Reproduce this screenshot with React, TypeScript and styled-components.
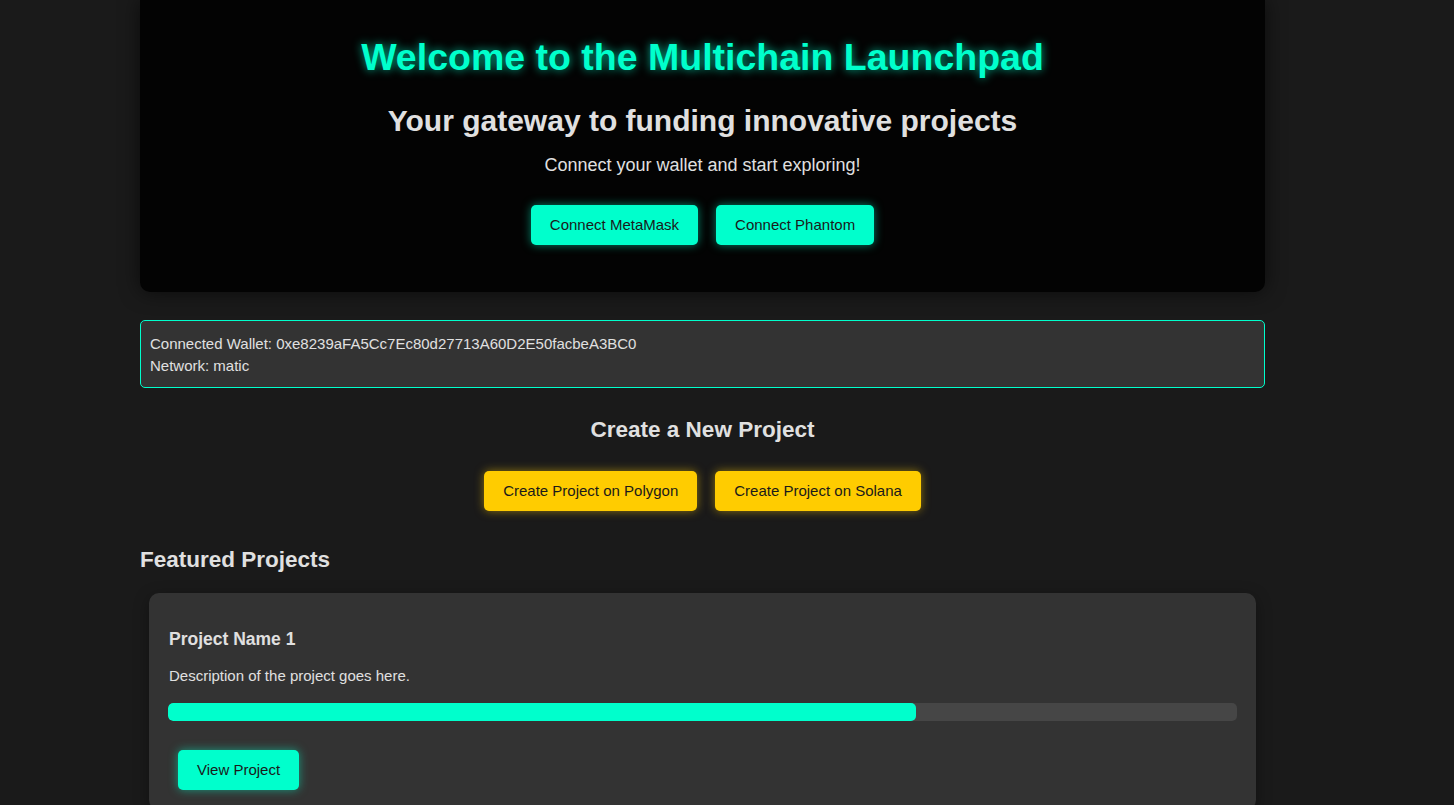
import styled, { createGlobalStyle } from 'styled-components'

const colors = {
  page: '#1a1a1a',
  hero: '#030303',
  panel: '#333333',
  track: '#464646',
  text: '#e0e0e0',
  accent: '#00ffcc',
  yellow: '#ffcc00',
  dark: '#1a1a1a',
}

const GlobalStyle = createGlobalStyle`
  html, body {
    margin: 0;
    padding: 0;
    background: ${colors.page};
    color: ${colors.text};
    font-family: 'Liberation Sans', Arial, sans-serif;
    font-size: 15px;
  }
`

const Page = styled.div`
  width: 1125px;
  margin-left: 140px;
  display: flex;
  flex-direction: column;
`

const Hero = styled.header`
  background: ${colors.hero};
  border-radius: 0 0 10px 10px;
  box-shadow: 0 0 20px rgba(0, 0, 0, 0.6);
  padding: 35px 20px 47px;
  display: flex;
  flex-direction: column;
  align-items: center;
  text-align: center;
`

const Title = styled.h1`
  margin: 0;
  font-size: 37.5px;
  line-height: 44px;
  font-weight: bold;
  color: ${colors.accent};
  text-shadow: 0 0 10px rgba(0, 255, 204, 0.7);
`

const Subtitle = styled.h2`
  margin: 25px 0 0;
  font-size: 30px;
  line-height: 34px;
  font-weight: bold;
  color: ${colors.text};
`

const Lead = styled.p`
  margin: 17px 0 0;
  font-size: 18px;
  line-height: 20px;
`

// Row of buttons, centered
const ButtonRow = styled.div<{ top: number }>`
  display: flex;
  justify-content: center;
  gap: 18px;
  margin-top: ${(p) => p.top}px;
`

const Button = styled.button<{ tone?: 'accent' | 'yellow' }>`
  border: none;
  border-radius: 5px;
  padding: 11px 19px;
  font-family: inherit;
  font-size: 15px;
  line-height: 18px;
  color: ${colors.dark};
  cursor: pointer;
  background: ${(p) => (p.tone === 'yellow' ? colors.yellow : colors.accent)};
  box-shadow: ${(p) =>
    p.tone === 'yellow'
      ? '0 0 10px rgba(255, 204, 0, 0.5)'
      : '0 0 10px rgba(0, 255, 204, 0.5)'};
`

const WalletBox = styled.div`
  margin-top: 28px;
  background: ${colors.panel};
  border: 1px solid ${colors.accent};
  border-radius: 5px;
  padding: 12px 9px 10px;
  font-size: 15px;
  line-height: 22px;
`

const SectionTitle = styled.h2<{ center?: boolean; top: number }>`
  margin: ${(p) => p.top}px 0 0;
  font-size: 22.5px;
  line-height: 26px;
  font-weight: bold;
  text-align: ${(p) => (p.center ? 'center' : 'left')};
`

const Card = styled.div`
  margin: 20px 9px 0;
  background: ${colors.panel};
  border-radius: 10px;
  box-shadow: 0 4px 15px rgba(0, 0, 0, 0.35);
  padding: 36px 19px 20px;
`

const CardTitle = styled.h3`
  margin: 0 0 0 1px;
  font-size: 17.5px;
  line-height: 20px;
  font-weight: bold;
`

const CardText = styled.p`
  margin: 18px 0 0 1px;
  font-size: 15px;
  line-height: 17px;
`

const Track = styled.div`
  margin-top: 19px;
  height: 18px;
  background: ${colors.track};
  border-radius: 5px;
  overflow: hidden;
`

const Fill = styled.div`
  height: 100%;
  background: ${colors.accent};
  border-radius: 5px;
`

const CardActions = styled.div`
  margin-top: 29px;
  padding-left: 10px;
  display: flex;
`

const projects = [{ name: 'Project Name 1', description: 'Description of the project goes here.', progress: 0.7 }]

const App = () => (
  <>
    <GlobalStyle />
    <Page>
      <Hero>
        <Title>Welcome to the Multichain Launchpad</Title>
        <Subtitle>Your gateway to funding innovative projects</Subtitle>
        <Lead>Connect your wallet and start exploring!</Lead>
        <ButtonRow top={30}>
          <Button>Connect MetaMask</Button>
          <Button>Connect Phantom</Button>
        </ButtonRow>
      </Hero>

      <WalletBox>
        <div>Connected Wallet: 0xe8239aFA5Cc7Ec80d27713A60D2E50facbeA3BC0</div>
        <div>Network: matic</div>
      </WalletBox>

      <SectionTitle center top={29}>
        Create a New Project
      </SectionTitle>
      <ButtonRow top={28}>
        <Button tone="yellow">Create Project on Polygon</Button>
        <Button tone="yellow">Create Project on Solana</Button>
      </ButtonRow>

      <SectionTitle top={36}>Featured Projects</SectionTitle>
      {projects.map((project) => (
        <Card key={project.name}>
          <CardTitle>{project.name}</CardTitle>
          <CardText>{project.description}</CardText>
          <Track>
            <Fill style={{ width: `${project.progress * 100}%` }} />
          </Track>
          <CardActions>
            <Button>View Project</Button>
          </CardActions>
        </Card>
      ))}
    </Page>
  </>
)

export default App
